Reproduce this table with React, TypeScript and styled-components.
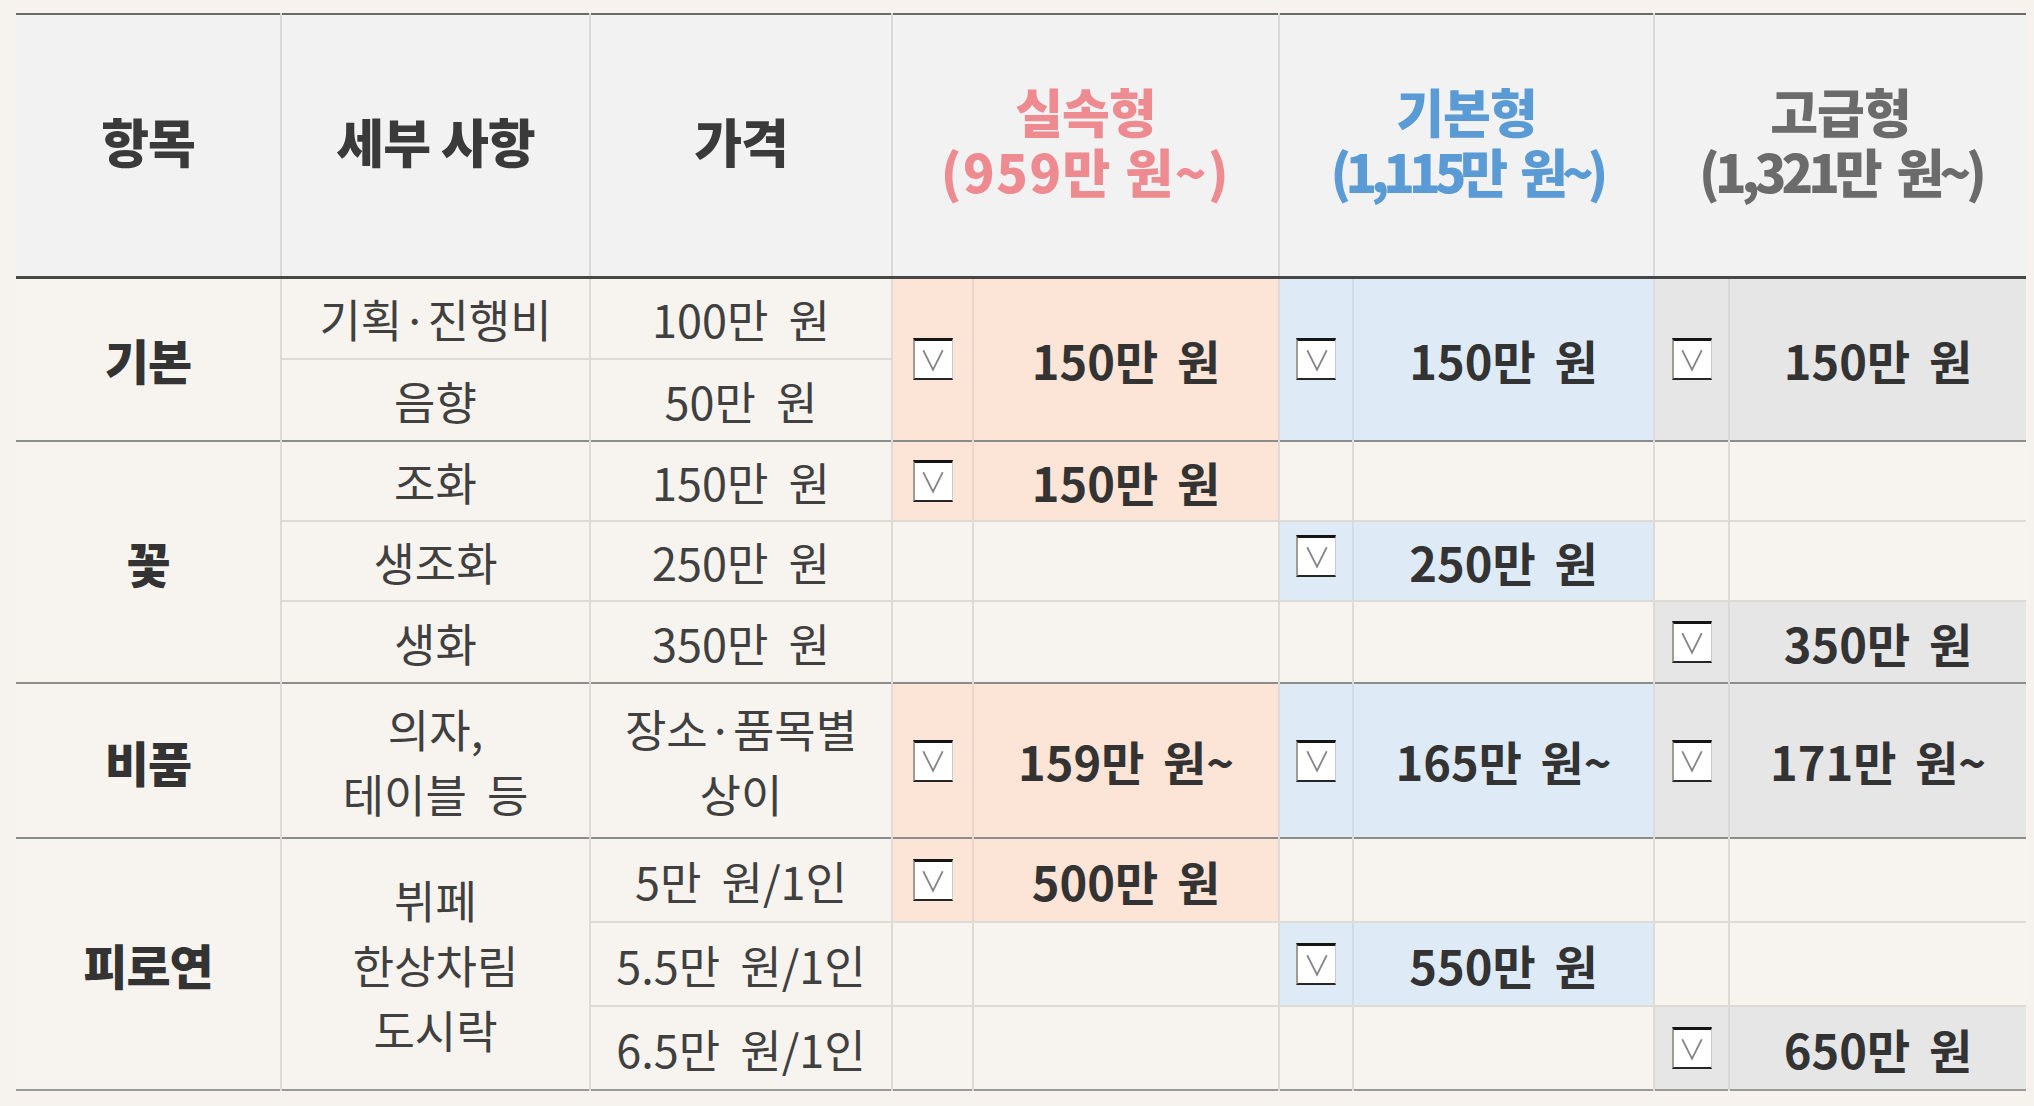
import React from 'react';
import styled, { createGlobalStyle } from 'styled-components';

const GlobalStyle = createGlobalStyle`
  html, body {
    margin: 0;
    background: #f6f3ee;
  }
  body {
    font-family: "Noto Sans CJK KR", "Noto Sans", sans-serif;
  }
`;

const Page = styled.div`
  padding: 13px 8px 17px 16px;
`;

const Table = styled.table`
  width: 2010px;
  border-collapse: collapse;
  table-layout: fixed;
  color: #3b3b3b;
`;

const edges = {
  head: '3px solid #474747',
  group: '2px solid #8c8c8c',
  sub: '2px solid #dedbd6',
  end: '2px solid #9a9a9a',
};

type Edge = keyof typeof edges;

const HeadRow = styled.tr`
  height: 263px;
  border-top: 2px solid #6a6a6a;
  border-bottom: ${edges.head};
`;

const Row = styled.tr<{ $h: number; $edge: Edge }>`
  height: ${(p) => p.$h}px;
  border-bottom: ${(p) => edges[p.$edge]};
`;

const HeadCell = styled.th<{ $color?: string }>`
  padding: 0 0 8px;
  background: #f2f2f2;
  color: ${(p) => p.$color || '#3a3a3a'};
  font-size: 52px;
  font-weight: 800;
  line-height: 60px;
  letter-spacing: -1px;
  text-align: center;
  vertical-align: middle;
  border-left: 2px solid #d9d9d9;
  &:first-child {
    border-left: none;
  }
`;

// the reference face has narrow "1"s, so each price line gets its own tracking
const Price = styled.span<{ $ls: number }>`
  display: block;
  letter-spacing: ${(p) => p.$ls}px;
  word-spacing: ${(p) => (p.$ls < 0 ? 12 : 0)}px;
  white-space: nowrap;
`;

const Cell = styled.td`
  padding: 0;
  background: #f7f4ef;
  text-align: center;
  vertical-align: middle;
  border-left: 2px solid #dedbd6;
`;

const GroupCell = styled(Cell)`
  border-left: none;
  font-size: 48px;
  font-weight: 800;
  color: #333;
  letter-spacing: -1px;
`;

const TextCell = styled(Cell)`
  font-size: 45px;
  font-weight: 400;
  line-height: 65px;
  color: #404040;
  word-spacing: 10px;
`;

const tones = {
  s: '#fce4d6',
  b: '#deebf7',
  g: '#e6e6e6',
};

type Tone = keyof typeof tones;

const CheckCell = styled(Cell)<{ $tone?: Tone }>`
  background: ${(p) => (p.$tone ? tones[p.$tone] : '#f7f4ef')};
`;

const ValueCell = styled(Cell)<{ $tone?: Tone }>`
  background: ${(p) => (p.$tone ? tones[p.$tone] : '#f7f4ef')};
  border-left-color: ${(p) => (p.$tone ? 'rgba(0, 0, 0, 0.06)' : '#dedbd6')};
  font-size: 47px;
  font-weight: 700;
  color: #333;
  word-spacing: 8px;
`;

const Box = styled.span<{ $shift?: number }>`
  display: inline-flex;
  align-items: center;
  justify-content: center;
  box-sizing: border-box;
  width: 40px;
  height: 42px;
  background: #fff;
  border-top: 3px solid #151515;
  border-bottom: 2px solid #262626;
  border-left: 2px solid #a39a92;
  border-right: 1px solid #c9c9c9;
  vertical-align: middle;
  transform: translateY(${(p) => p.$shift || 0}px);
`;

const Check = ({ shift }: { shift?: number }) => (
  <Box $shift={shift}>
    <svg width="26" height="26" viewBox="0 0 24 24">
      <polyline points="3,3 12,21 21,3" fill="none" stroke="#858585" strokeWidth="1.6" />
    </svg>
  </Box>
);

type Plan = string | null;
const order: Tone[] = ['s', 'b', 'g'];

const PlanCells = ({ plans, span, shift }: { plans: Plan[]; span?: number; shift?: number }) => (
  <>
    {plans.map((v, i) => {
      const tone = v ? order[i] : undefined;
      return (
        <React.Fragment key={i}>
          <CheckCell rowSpan={span} $tone={tone}>
            {v && <Check shift={shift} />}
          </CheckCell>
          <ValueCell rowSpan={span} $tone={tone}>
            {v}
          </ValueCell>
        </React.Fragment>
      );
    })}
  </>
);

const widths = [265, 309, 302, 81, 306, 74, 301, 75, 297];

export default function App() {
  return (
    <Page>
      <GlobalStyle />
      <Table>
        <colgroup>
          {widths.map((w, i) => (
            <col key={i} style={{ width: w }} />
          ))}
        </colgroup>
        <thead>
          <HeadRow>
            <HeadCell>항목</HeadCell>
            <HeadCell>세부 사항</HeadCell>
            <HeadCell>가격</HeadCell>
            <HeadCell colSpan={2} $color="#ee8b91">
              실속형
              <Price $ls={1.5}>(959만 원~)</Price>
            </HeadCell>
            <HeadCell colSpan={2} $color="#5b9bd5">
              기본형
              <Price $ls={-6}>(1,115만 원~)</Price>
            </HeadCell>
            <HeadCell colSpan={2} $color="#6b6b6b">
              고급형
              <Price $ls={-5}>(1,321만 원~)</Price>
            </HeadCell>
          </HeadRow>
        </thead>
        <tbody>
          <Row $h={82} $edge="sub">
            <GroupCell rowSpan={2}>기본</GroupCell>
            <TextCell>기획·진행비</TextCell>
            <TextCell>100만 원</TextCell>
            <PlanCells span={2} plans={['150만 원', '150만 원', '150만 원']} />
          </Row>
          <Row $h={82} $edge="group">
            <TextCell>음향</TextCell>
            <TextCell>50만 원</TextCell>
          </Row>

          <Row $h={80} $edge="sub">
            <GroupCell rowSpan={3}>꽃</GroupCell>
            <TextCell>조화</TextCell>
            <TextCell>150만 원</TextCell>
            <PlanCells plans={['150만 원', null, null]} />
          </Row>
          <Row $h={80} $edge="sub">
            <TextCell>생조화</TextCell>
            <TextCell>250만 원</TextCell>
            <PlanCells plans={[null, '250만 원', null]} shift={-5} />
          </Row>
          <Row $h={82} $edge="group">
            <TextCell>생화</TextCell>
            <TextCell>350만 원</TextCell>
            <PlanCells plans={[null, null, '350만 원']} />
          </Row>

          <Row $h={155} $edge="group">
            <GroupCell>비품</GroupCell>
            <TextCell>
              의자,
              <br />
              테이블 등
            </TextCell>
            <TextCell>
              장소·품목별
              <br />
              상이
            </TextCell>
            <PlanCells plans={['159만 원~', '165만 원~', '171만 원~']} />
          </Row>

          <Row $h={84} $edge="sub">
            <GroupCell rowSpan={3}>피로연</GroupCell>
            <TextCell rowSpan={3}>
              뷔페
              <br />
              한상차림
              <br />
              도시락
            </TextCell>
            <TextCell>5만 원/1인</TextCell>
            <PlanCells plans={['500만 원', null, null]} />
          </Row>
          <Row $h={84} $edge="sub">
            <TextCell>5.5만 원/1인</TextCell>
            <PlanCells plans={[null, '550만 원', null]} />
          </Row>
          <Row $h={84} $edge="end">
            <TextCell>6.5만 원/1인</TextCell>
            <PlanCells plans={[null, null, '650만 원']} />
          </Row>
        </tbody>
      </Table>
    </Page>
  );
}
